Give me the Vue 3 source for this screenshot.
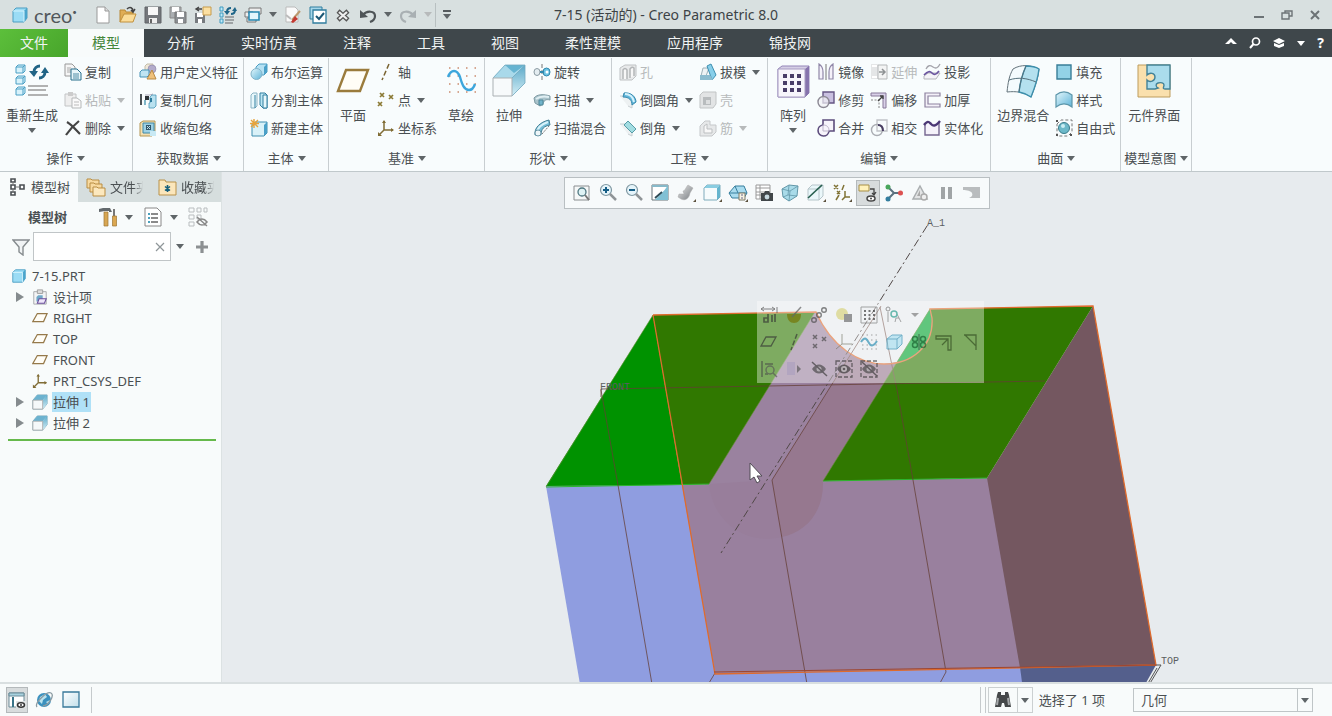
<script setup>
import { ref } from 'vue'

const quick = [
  { icon: 'new', name: '新建' },
  { icon: 'open', name: '打开' },
  { icon: 'save', name: '保存' },
  { icon: 'saveas', name: '保存副本' },
  { icon: 'upload', name: '另存为' },
  { icon: 'regenlist', name: '重新生成' },
  { icon: 'windows', name: '窗口' },
  { caret: true, name: '窗口选项' },
  { icon: 'erase', name: '拭除' },
  { icon: 'check', name: '检查' },
  { icon: 'close', name: '关闭' },
  { icon: 'undo', name: '撤消' },
  { caret: true, name: '撤消列表' },
  { icon: 'redo', name: '重做', disabled: true },
  { caret: true, name: '重做列表', disabled: true }
]

const tabs = ['分析', '实时仿真', '注释', '工具', '视图', '柔性建模', '应用程序', '锦技网']

const groups = [
  {
    title: '操作',
    cols: [
      { big: true, icon: 'regen', label: '重新生成', caret: true },
      { items: [
        { icon: 'copy', label: '复制' },
        { icon: 'paste', label: '粘贴', caret: true, disabled: true },
        { icon: 'delete', label: '删除', caret: true }
      ] }
    ]
  },
  {
    title: '获取数据',
    cols: [
      { items: [
        { icon: 'udf', label: '用户定义特征' },
        { icon: 'copygeom', label: '复制几何' },
        { icon: 'shrink', label: '收缩包络' }
      ] }
    ]
  },
  {
    title: '主体',
    cols: [
      { items: [
        { icon: 'boolean', label: '布尔运算' },
        { icon: 'split', label: '分割主体' },
        { icon: 'newbody', label: '新建主体' }
      ] }
    ]
  },
  {
    title: '基准',
    cols: [
      { big: true, icon: 'plane', label: '平面' },
      { items: [
        { icon: 'axis', label: '轴' },
        { icon: 'point', label: '点', caret: true },
        { icon: 'csys', label: '坐标系' }
      ] },
      { big: true, icon: 'sketch', label: '草绘' }
    ]
  },
  {
    title: '形状',
    cols: [
      { big: true, icon: 'extrude', label: '拉伸' },
      { items: [
        { icon: 'revolve', label: '旋转' },
        { icon: 'sweep', label: '扫描', caret: true },
        { icon: 'blend', label: '扫描混合' }
      ] }
    ]
  },
  {
    title: '工程',
    wide: true,
    cols: [
      { items: [
        { icon: 'hole', label: '孔', disabled: true },
        { icon: 'round', label: '倒圆角', caret: true },
        { icon: 'chamfer', label: '倒角', caret: true }
      ] },
      { items: [
        { icon: 'draft', label: '拔模', caret: true },
        { icon: 'shell', label: '壳', disabled: true },
        { icon: 'rib', label: '筋', caret: true, disabled: true }
      ] }
    ]
  },
  {
    title: '编辑',
    wide: true,
    cols: [
      { big: true, icon: 'pattern', label: '阵列', caret: true },
      { items: [
        { icon: 'mirror', label: '镜像' },
        { icon: 'trim', label: '修剪' },
        { icon: 'merge', label: '合并' }
      ] },
      { items: [
        { icon: 'extend', label: '延伸', disabled: true },
        { icon: 'offset', label: '偏移' },
        { icon: 'intersect', label: '相交' }
      ] },
      { items: [
        { icon: 'project', label: '投影' },
        { icon: 'thicken', label: '加厚' },
        { icon: 'solidify', label: '实体化' }
      ] }
    ]
  },
  {
    title: '曲面',
    cols: [
      { big: true, icon: 'boundary', label: '边界混合' },
      { items: [
        { icon: 'fill', label: '填充' },
        { icon: 'style', label: '样式' },
        { icon: 'freestyle', label: '自由式' }
      ] }
    ]
  },
  {
    title: '模型意图',
    wide: true,
    cols: [{ big: true, icon: 'interface', label: '元件界面' }]
  }
]

const tree = [
  { icon: 'design', label: '设计项', open: true },
  { icon: 'planes', label: 'RIGHT' },
  { icon: 'planes', label: 'TOP' },
  { icon: 'planes', label: 'FRONT' },
  { icon: 'csys', label: 'PRT_CSYS_DEF' },
  { icon: 'extrudes', label: '拉伸 1', open: true, selected: true },
  { icon: 'extrudes', label: '拉伸 2', open: true }
]

const viewTools = [
  ['zfit', '重新调整'], ['zin', '放大'], ['zout', '缩小'], ['repaint', '重画'],
  ['render', '渲染选项'], ['shade', '显示样式'], ['saved', '已保存方向'], ['viewmgr', '视图管理器'],
  ['persp', '透视图'], ['section', '截面'], ['datumdisp', '基准显示'], ['annot', '注释显示'],
  ['spin', '旋转中心'], ['simulate', '仿真'], ['pause', '暂停'], ['resume', '继续']
]

const miniTools = [
  ['dim', 'appearance', 'link', 'body', 'patternm', 'family', 'down'],
  ['planem', 'axism', 'pointm', 'csysm', 'sketchm', 'extrudem', 'flower', 'offsetm', 'draftm'],
  ['query', 'arrowm', 'hide', 'show', 'hideall']
]

const search = ref('')
const filter = ref('几何')
</script>

<template>
  <div class="app">
    <svg class="defs" width="0" height="0" aria-hidden="true">
      <defs>
        <linearGradient id="gb" x1="0" y1="0" x2="1" y2="1"><stop offset="0" stop-color="#e4f7fc" /><stop offset="1" stop-color="#5fb4d8" /></linearGradient>
        <linearGradient id="gw" x1="0" y1="0" x2="1" y2="1"><stop offset="0" stop-color="#ffffff" /><stop offset="1" stop-color="#c3dfea" /></linearGradient>
        <linearGradient id="gg" x1="0" y1="0" x2="1" y2="1"><stop offset="0" stop-color="#e8e8e8" /><stop offset="1" stop-color="#777c80" /></linearGradient>
        <linearGradient id="gv" x1="0" y1="0" x2="0" y2="1"><stop offset="0" stop-color="#5ba9c8" /><stop offset="1" stop-color="#d5eff7" /></linearGradient>
      </defs>
      <symbol id="cube" viewBox="0 0 18 18"><path d="M2 5l3-3h11v10l-3 4H2z" fill="#9bdcf5" stroke="#4b9dc2" /><path d="M13 5l3-3v10l-3 4z" fill="#4aa5cc" /><path d="M2 5h11v11" fill="none" stroke="#d5f4fd" /></symbol>
      <symbol id="new" viewBox="0 0 18 18"><path d="M3 1h8l4 4v12H3z" fill="#fff" stroke="#999" /><path d="M11 1v4h4" fill="#ddd" stroke="#999" /></symbol>
      <symbol id="open" viewBox="0 0 18 18"><path d="M1 16V4h5l1 2h7v3" fill="#e0ad55" stroke="#b98834" /><path d="M1 16l4-8h12l-3 8z" fill="#fbdc98" stroke="#c0903c" /><path d="M8 3c3-3 6-1 6 2m-2-1l2 2 2-3" fill="none" stroke="#444" stroke-width="1.5" /></symbol>
      <symbol id="save" viewBox="0 0 18 18"><path d="M1 1h16v16H1z" fill="#74777b" stroke="#606468" /><path d="M4 1h10v8H4z" fill="#f7f7f7" /><path d="M5 12h8v5H5z" fill="#eee" /><path d="M6 13h2v4H6z" fill="#666" /></symbol>
      <symbol id="saveas" viewBox="0 0 18 18"><path d="M1 1h11v11H1z" fill="#aaaeb1" stroke="#888" /><path d="M3 1h7v5H3z" fill="#fff" /><path d="M6 6h11v11H6z" fill="#8b8f93" stroke="#777" /><path d="M8 6h7v5H8zM9 13h5v4H9z" fill="#fff" /></symbol>
      <symbol id="upload" viewBox="0 0 18 18"><path d="M1 7h10v10H1z" fill="#777b7f" /><path d="M3 7h6v4H3zM4 13h4v4H4z" fill="#fff" /><path d="M9 1h8v8H9z" fill="#fbe0a2" stroke="#c69b4c" /><path d="M8 3H3m2-2L2 3l3 2" stroke="#444" fill="none" stroke-width="1.4" /></symbol>
      <symbol id="regenlist" viewBox="0 0 18 18"><path d="M1 1h3v4H1zM1 7h3v4H1zM1 13h3v4H1z" fill="#bfe9f7" stroke="#3e9bc1" /><path d="M6 11h9M6 14h9M6 17h8" stroke="#8a8e91" stroke-width="1.300" /><path d="M8 6c0-3 2-4 4-4M16 4c0 3-2 4-4 4" fill="none" stroke="#1f6689" stroke-width="2" /><path d="M5 5h6L8 9zM13 5h5l-2-4z" fill="#1f6689" /></symbol>
      <symbol id="windows" viewBox="0 0 18 18"><path d="M5 2h12v6H5zM1 6v5h8V6zM3 12v4h9v-4z" fill="#eee" stroke="#777" /><path d="M5 6h10v8H5z" fill="#e4f6fc" stroke="#2586b0" stroke-width="1.5" /></symbol>
      <symbol id="erase" viewBox="0 0 18 18"><path d="M2 1h9l3 3v12H2z" fill="#fafafa" stroke="#bbb" /><path d="M8 14l8-9" stroke="#bb9a6e" stroke-width="2" /><path d="M7 16l4-6 3 3-5 4z" fill="#c33a32" /><path d="M2 9l5 4" stroke="#bbb" stroke-width="2" /></symbol>
      <symbol id="check" viewBox="0 0 18 18"><path d="M1 1h12v12H1z" fill="#a7d7ea" stroke="#307e9f" /><path d="M4 4h13v13H4z" fill="#fff" stroke="#307e9f" stroke-width="1.3" /><path d="M7 10l3 3 5-6" fill="none" stroke="#1c5775" stroke-width="2" /></symbol>
      <symbol id="close" viewBox="0 0 18 18"><path d="M4 5l10 9M14 5L4 14" stroke="#555" stroke-width="4.500" /><path d="M5 6l8 7M13 6l-8 7" stroke="#eee" stroke-width="2.300" /></symbol>
      <symbol id="undo" viewBox="0 0 18 18"><path d="M4 9c4-5 12-4 12 1 0 3-2 5-5 6" fill="none" stroke="#4f5558" stroke-width="2.200" /><path d="M1 4v8l8-1z" fill="#4f5558" /></symbol>
      <symbol id="redo" viewBox="0 0 18 18"><path d="M14 9C10 4 2 5 2 10c0 3 2 5 5 6" fill="none" stroke="#a9b0b3" stroke-width="2.200" /><path d="M17 4v8l-8-1z" fill="#a9b0b3" /></symbol>

      <symbol id="regen" viewBox="0 0 34 34"><g fill="#d8f2fb" stroke="#4b9fc4"><path d="M1 3l2-2h7v6l-2 2H1zM1 14l2-2h7v6l-2 2H1zM1 25l2-2h7v6l-2 2H1z" /><path d="M1 3h7v6M8 3l2-2M1 14h7v6M8 14l2-2M1 25h7v6M8 25l2-2" fill="none" /></g><path d="M13 22h20M13 26h18M13 31h20" stroke="#999" stroke-width="1.600" /><path d="M19 8c0-4 3-6 6-6M30 8c0 4-3 6-6 6" fill="none" stroke="#216486" stroke-width="3" /><path d="M14 7h9l-4 6zM26 9h8l-4-6z" fill="#216486" /></symbol>
      <symbol id="copy" viewBox="0 0 18 18"><path d="M1 1h7l3 3v9H1z" fill="#f5f5f5" stroke="#999" /><path d="M3 5h4M3 7h4M3 9h4" stroke="#aaa" /><path d="M7 6h6l4 4v7H7z" fill="#e8f5f9" stroke="#276e8c" /><path d="M9 11h6M9 13h6M9 15h6" stroke="#4e8ca5" /></symbol>
      <symbol id="paste" viewBox="0 0 18 18"><path d="M1 3h11v12H1z" fill="#eee" stroke="#c2c4c5" /><path d="M4 1h5v4H4z" fill="#ccc" /><path d="M8 7h5l4 3v7H8z" fill="#fafafa" stroke="#b5b8b9" /><path d="M10 11h5M10 14h5" stroke="#bbb" /></symbol>
      <symbol id="delete" viewBox="0 0 18 18"><path d="M3 3c5 3 8 7 13 12M15 2C10 6 6 10 2 16" fill="none" stroke="#444" stroke-width="2.2" /></symbol>
      <symbol id="udf" viewBox="0 0 18 18"><path d="M6 3l2-2h6v6l-2 2H6z" fill="#eee7d8" stroke="#c4bda9" /><circle cx="13" cy="6" r="4" fill="#b3accb" stroke="#8983a5" stroke-width=".6" /><path d="M1 9l2-2h7v5l-2 2H1z" fill="#bfe4f3" stroke="#4793b7" /><path d="M13 7l4 9H8z" fill="#efc17b" stroke="#b88843" /></symbol>
      <symbol id="copygeom" viewBox="0 0 18 18"><path d="M2 3v11" stroke="#4c5357" stroke-width="2" /><path d="M6 4h5l3-1" stroke="#aab" fill="none" /><path d="M6 5h4v4H6z" fill="#2e3438" /><path d="M6 9v5" stroke="#7fb6c9" stroke-width="2" /><path d="M11 6l2-2h4v11l-2 2h-5v-5h1z" fill="#b8e1ef" stroke="#4595b6" stroke-width=".8" /><path d="M12 7v4" stroke="#2d7b9c" stroke-width="2" /></symbol>
      <symbol id="shrink" viewBox="0 0 18 18"><path d="M1 4l3-2h12v12l-3 3H1z" fill="#f3dfb1" stroke="#b49652" /><path d="M4 4h11v10H4z" fill="#9ed1e4" stroke="#3f88a8" /><path d="M7 6h5v5H7z" fill="#34566a" /><path d="M8 7l3 3m0-3l-3 3" stroke="#bde3f0" /><path d="M11 12h6v5h-6z" fill="#c8e9f4" /></symbol>
      <symbol id="boolean" viewBox="0 0 18 18"><path d="M6 4l3-3h8v8l-3 3H6z" fill="#b5e1f3" stroke="#4b9dc2" /><path d="M14 4l3-3v8l-3 3z" fill="#4aa0c8" /><circle cx="6.500" cy="11" r="5.500" fill="url(#gb)" stroke="#84b4c9" /></symbol>
      <symbol id="split" viewBox="0 0 18 18"><path d="M1 4l2-2h4v13l-2 2H1z" fill="#e7f7fb" stroke="#8bb3c4" /><path d="M5 4v13M10 2h5l2 2v13h-4l-3-3z" fill="#bce6f4" stroke="#317e9f" /><path d="M13 4h4v13h-4z" fill="#e7f7fb" stroke="#317e9f" /></symbol>
      <symbol id="newbody" viewBox="0 0 18 18"><path d="M2 5l3-2h12v11l-3 3H2z" fill="#d9f1f8" stroke="#3f8eb0" /><path d="M14 6l3-3v11l-3 3z" fill="#4aa0c8" /><path d="M4 0v9M0 4.500h9M1 1l7 7M8 1L1 8" stroke="#e6a33c" stroke-width="1.4" /></symbol>
      <symbol id="plane" viewBox="0 0 34 34"><path d="M10 6h22l-8 21H2z" fill="#fffdf6" stroke="#9a7b3c" stroke-width="2.400" /></symbol>
      <symbol id="planes" viewBox="0 0 18 18"><path d="M6 4h11l-4 9H1z" fill="#fffdf6" stroke="#95794a" stroke-width="1.400" /></symbol>
      <symbol id="axis" viewBox="0 0 18 18"><path d="M12 1l-7 16" stroke="#7a6432" stroke-width="1.5" stroke-dasharray="5 2.500" /></symbol>
      <symbol id="point" viewBox="0 0 18 18"><path d="M3 2l4 4M7 2L3 6M12 4l4 4M16 4l-4 4M1 11l4 4M5 11l-4 4" stroke="#8b7a35" stroke-width="1.700" /></symbol>
      <symbol id="csys" viewBox="0 0 18 18"><path d="M7 2v9h9M7 11l-5 5" fill="none" stroke="#806c35" stroke-width="1.500" /><path d="M5 4l2-3 2 3zM14 9l3 2-3 2zM1 13v4h4z" fill="#806c35" /></symbol>
      <symbol id="sketch" viewBox="0 0 34 34"><path d="M5 4h28M5 12h28M5 20h28M5 28h28" stroke="#c98a6d" stroke-width="1.500" stroke-dasharray="1.500 7" /><path d="M4 13c3-8 9-8 12 0 2 7 4 13 9 13 3 0 5-3 6-6" fill="none" stroke="#3da6dc" stroke-width="2.400" /></symbol>
      <symbol id="extrude" viewBox="0 0 34 34"><path d="M1 14L13 1h20v18L20 32H1z" fill="#9bcfe5" /><path d="M13 1h20L20 14H1z" fill="#a9d9ea" /><path d="M13 1h20L22 9z" fill="#66b4d1" /><path d="M20 14L33 1v18L20 32z" fill="url(#gv)" /><path d="M1 14L13 1h20v18L20 32M20 14L33 1" fill="none" stroke="#74aabf" stroke-width=".8" /><path d="M1 14h19v18H1z" fill="#f7fafb" stroke="#aab0b3" /></symbol>
      <symbol id="extrudes" viewBox="0 0 18 18"><path d="M1 7l5-6h11v10l-5 6H1z" fill="#b7dfee" stroke="#81aebf" /><path d="M6 1h11l-5 6H1z" fill="#6cb2cf" /><path d="M12 7l5-6v10l-5 6z" fill="url(#gv)" /><path d="M1 7h11v10H1z" fill="#f5f8f9" stroke="#aaa" /></symbol>
      <symbol id="revolve" viewBox="0 0 18 18"><path d="M9 1v16" stroke="#777" stroke-dasharray="4 2" /><ellipse cx="4" cy="9" rx="3" ry="3.500" fill="#e4edf1" stroke="#8a9aa2" /><ellipse cx="13.500" cy="9" rx="3.500" ry="4" fill="#6ec3e3" stroke="#3188ad" /><circle cx="14" cy="9" r="1.500" fill="#fff" /><path d="M7 9h4" stroke="#3188ad" stroke-width="2" /></symbol>
      <symbol id="sweep" viewBox="0 0 18 18"><path d="M1 7c3-4 10-4 16-2v4c-4-1-6 0-7 4l-3 2-5-3z" fill="#a9c3cb" stroke="#7f9aa3" /><path d="M3 8c4-3 8-3 13-2" stroke="#e0eff3" fill="none" stroke-width="2" /><path d="M6 9h4v5H6z" fill="#71b3ca" stroke="#4f8799" /></symbol>
      <symbol id="blend" viewBox="0 0 18 18"><path d="M2 16C1 9 7 3 16 1l1 5c-6 1-9 4-9 10z" fill="#74bdd7" stroke="#447f94" /><path d="M4 14C4 9 9 5 15 3" stroke="#d7f2fa" stroke-width="2" fill="none" /><circle cx="5" cy="14" r="3" fill="#eef6f9" stroke="#6c98a8" /><path d="M9 15l7-8" stroke="#777" stroke-dasharray="2 1" /></symbol>
      <symbol id="hole" viewBox="0 0 18 18"><path d="M1 5l5-3h11v11l-4 4H1z" fill="#e8eaeb" stroke="#bfc2c4" /><path d="M4 16V7q2-3 4 0v9M11 15V6q2-3 4-1v8" fill="#f7f7f7" stroke="#b3b6b8" stroke-width="1.500" /></symbol>
      <symbol id="round" viewBox="0 0 18 18"><path d="M1 5h7l5 4v8l-4-2" fill="#edf1f2" stroke="#c9d0d3" /><path d="M5 2c7-1 12 4 12 9l-4 3c0-5-3-8-9-8z" fill="#61b6da" stroke="#388aad" /><path d="M6 3c5 0 8 3 9 8" stroke="#d4f2fc" stroke-width="2" fill="none" /></symbol>
      <symbol id="chamfer" viewBox="0 0 18 18"><path d="M1 5h6l6 7v5l-4-2" fill="#edf1f2" stroke="#c9d0d3" /><path d="M9 2l8 8-4 4-8-8z" fill="#a2dde2" stroke="#579ca7" /></symbol>
      <symbol id="draft" viewBox="0 0 18 18"><path d="M4 5h6l-3 8H2z" fill="#eef3f5" stroke="#9eb1b8" /><path d="M8 3l4-2 5 11-4 5z" fill="#88cfea" stroke="#3e90b1" /><path d="M1 12h10l3 5H1z" fill="#8cbccf" /></symbol>
      <symbol id="shell" viewBox="0 0 18 18"><path d="M1 4l3-3h13v12l-3 4H1z" fill="#e2e4e5" stroke="#c1c4c5" /><path d="M4 6h8v8H4z" fill="#b8bcbe" /><path d="M7 9h4v4H7z" fill="#dcdedf" /></symbol>
      <symbol id="rib" viewBox="0 0 18 18"><path d="M1 7l5-5h5v4h6v7l-4 4H1z" fill="#e6e8e9" stroke="#c5c8ca" /><path d="M5 7l3-2v5h5v4H5z" fill="#f8f8f8" stroke="#bcbfc1" /></symbol>
      <symbol id="pattern" viewBox="0 0 34 34"><path d="M2 5l4-3h27v27l-4 4H2z" fill="#d5cee5" stroke="#9485b8" /><path d="M29 5l4-3v27l-4 4z" fill="#8673ad" /><path d="M2 5h27v28H2z" fill="#f7f5fb" stroke="#a79cc2" /><g fill="#493d68"><path d="M7 10h4v4H7zM14 10h4v4h-4zM21 10h4v4h-4zM7 17h4v4H7zM14 17h4v4h-4zM21 17h4v4h-4zM7 24h4v4H7zM14 24h4v4h-4zM21 24h4v4h-4z" /></g></symbol>
      <symbol id="mirror" viewBox="0 0 18 18"><path d="M9 1v16" stroke="#777" /><path d="M2 1c3 2 4 4 4 8v7H2zM16 1c-3 2-4 4-4 8v7h4z" fill="#f5f2fa" stroke="#9087a8" stroke-width="1.200" /></symbol>
      <symbol id="trim" viewBox="0 0 18 18"><path d="M6 1h11v11H6z" fill="#c9c0e0" stroke="#655684" stroke-width="1.400" /><circle cx="6.500" cy="11" r="5.500" fill="#f2f2f5" fill-opacity=".7" stroke="#8d8a95" stroke-width="1.400" /></symbol>
      <symbol id="merge" viewBox="0 0 18 18"><path d="M6 6V1h11v11h-5a5.500 5.500 0 1 1-6-6z" fill="#f7f4fb" stroke="#5c4c7c" stroke-width="1.600" /><path d="M6 6c4 0 6 2 6 6H6z" fill="none" stroke="#bbb3c8" /></symbol>
      <symbol id="extend" viewBox="0 0 18 18"><path d="M1 1h7v15H1z" fill="#e4e6e7" /><path d="M8 2h9v14H8z" fill="#f3f4f4" stroke="#b4b7b8" /><path d="M2 3h5M2 14h5" stroke="#fff" stroke-width="2" /><path d="M9 9h6m-3-3l3 3-3 3" stroke="#8e9294" fill="none" stroke-width="1.500" /></symbol>
      <symbol id="offset" viewBox="0 0 18 18"><path d="M1 2h15v15h-3V5H1z" fill="#d9d1e9" stroke="#877899" /><path d="M1 9h8v8" stroke="#888" stroke-dasharray="2 1.500" fill="none" /><path d="M8 10l5-5m-3 0h3v3" stroke="#444" fill="none" stroke-width="1.400" /></symbol>
      <symbol id="intersect" viewBox="0 0 18 18"><path d="M7 1h10v11H7z" fill="none" stroke="#c0c2c7" stroke-width="1.300" /><circle cx="7" cy="11" r="5.500" fill="none" stroke="#aaadb3" stroke-width="1.400" /><path d="M8 6c3 0 5 2 5 6" stroke="#493e62" stroke-width="2" fill="none" /></symbol>
      <symbol id="project" viewBox="0 0 18 18"><path d="M3 6c2-4 4-4 7-2s5 1 7-3" stroke="#a3a3aa" fill="none" stroke-width="1.300" /><path d="M1 13l4-3h12l-4 6H1z" fill="#f4f3f7" stroke="#b5b5bb" /><path d="M1 12c4-4 6-4 8-2s4 2 7-2" stroke="#6b55a0" fill="none" stroke-width="1.700" /></symbol>
      <symbol id="thicken" viewBox="0 0 18 18"><path d="M17 2H2v14h15v-3H5V5h12z" fill="#f3f0f8" stroke="#8d829f" stroke-width="1.200" /></symbol>
      <symbol id="solidify" viewBox="0 0 18 18"><path d="M2 6v10h14V3" fill="#f5f2fa" stroke="#756790" stroke-width="1.400" /><path d="M1 6c4-5 5-3 7-1s4 3 9-3" fill="none" stroke="#4b3775" stroke-width="2.400" /></symbol>
      <symbol id="boundary" viewBox="0 0 34 34"><path d="M7 5c8-5 18-4 26 0-1 10-4 18-8 28-7-5-15-6-24-5 1-9 2-16 6-23z" fill="#f4fbfd" stroke="#64737b" /><path d="M20 2c6 0 10 1 13 3-1 10-4 18-8 28-4-3-7-4-12-5 1-9 3-17 7-26z" fill="#b4e1ef" stroke="#3c8fac" stroke-width="1.400" /><path d="M3 16c9-3 18-2 27 2M20 2c-4 9-6 17-7 26" stroke="#55717c" fill="none" /></symbol>
      <symbol id="fill" viewBox="0 0 18 18"><path d="M2 2h14v14H2z" fill="#93d2e7" stroke="#397e98" stroke-width="1.400" /></symbol>
      <symbol id="style" viewBox="0 0 18 18"><path d="M1 4c5-4 11-4 16 0v12c-5-4-11-4-16 0z" fill="url(#gb)" stroke="#5d96aa" stroke-width="1.200" /></symbol>
      <symbol id="freestyle" viewBox="0 0 18 18"><path d="M2 5l4-4h11v12l-4 4H2z" fill="none" stroke="#777" stroke-dasharray="3 2" /><circle cx="9" cy="9" r="5.500" fill="#6db9c9" stroke="#397b8a" /><circle cx="8" cy="7" r="2" fill="#cbeef2" /><path d="M1 1h2v2H1zM15 15h2v2h-2zM1 15h2v2H1z" fill="#555" /></symbol>
      <symbol id="interface" viewBox="0 0 34 34"><path d="M1 1h32v32H1z" fill="#fae0ad" stroke="#bd9c5c" /><path d="M10 1h23v24h-5c-3 0-1-2-1-4s-3-3-6-2-2 4 0 5l-3 1h-8v-9c3 3 8 1 8-3s-5-5-8-2z" fill="#aadcec" stroke="#438297" stroke-width="1.400" /></symbol>

      <symbol id="tree" viewBox="0 0 18 18"><g fill="#fff" stroke="#4a4f53" stroke-width="1.600"><path d="M3 1h4v3H3zM3 7h4v4H3zM3 14h4v3H3zM12 7h4v4h-4z" /></g><path d="M5 4v3M5 11v3M8 9h3" stroke="#777" /></symbol>
      <symbol id="folders" viewBox="0 0 20 20"><g fill="#f8daa0" stroke="#b98d43"><path d="M1 2h4l1 1h7v8H1z" /><path d="M4 6h4l1 1h7v8H4z" /><path d="M7 10h4l1 1h7v8H7z" fill="#fce8be" /></g></symbol>
      <symbol id="favor" viewBox="0 0 20 20"><path d="M2 3h6l1 2h10v13H2z" fill="#fbe6bb" stroke="#b9924b" /><path d="M10.500 8v7M8 9.500l5 4M13 9.500l-5 4" stroke="#17607c" stroke-width="1.600" /></symbol>
      <symbol id="tools" viewBox="0 0 20 20"><path d="M1 2l4-1h7l2 4h-3V4H7L1 5z" fill="#63696d" /><path d="M6 5h4v14H6z" fill="#d7a653" stroke="#9e7734" stroke-width=".7" /><path d="M16 2v7" stroke="#777" stroke-width="2" /><path d="M14.500 9h4v10h-4z" fill="#dba751" stroke="#9e7734" stroke-width=".7" /></symbol>
      <symbol id="sheet" viewBox="0 0 20 20"><path d="M2 1h12l4 4v14H2z" fill="#fff" stroke="#888" /><path d="M5 7h2M5 11h2M5 15h2" stroke="#4ba1bd" stroke-width="2" /><path d="M8 7h7M8 11h7M8 15h7" stroke="#666" stroke-width="1.300" /></symbol>
      <symbol id="treehide" viewBox="0 0 20 20"><g fill="none" stroke="#b9bdbf"><path d="M1 1h5v4H1zM1 8h5v4H1zM1 15h5v4H1zM9 1h4v4H9zM9 8h4v4H9zM16 1h3v4h-3z" /></g><path d="M9 15c3-4 7-4 10 0-3 4-7 4-10 0zM9 10l10 9" fill="none" stroke="#888" stroke-width="1.500" /></symbol>
      <symbol id="funnel" viewBox="0 0 18 18"><path d="M1 2h16l-6 7v8l-4-3V9z" fill="#f0f3f4" stroke="#858b8e" stroke-width="1.400" /></symbol>
      <symbol id="plus" viewBox="0 0 14 14"><path d="M7 1v12M1 7h12" stroke="#8c9092" stroke-width="3.200" /></symbol>
      <symbol id="design" viewBox="0 0 18 18"><path d="M2 3h14v14H2z" fill="#f3f4f5" stroke="#a2a5a8" /><path d="M6 1h6v4H6z" fill="#ddd" stroke="#999" /><path d="M5 9l2-2h5v5l-2 2H5z" fill="#6fa8c8" /><path d="M8 11h8l-2 5H6z" fill="#eee6fa" stroke="#6a4e9b" stroke-width="1.200" /></symbol>

      <symbol id="zfit" viewBox="0 0 20 20"><path d="M2 3h15v14H2z" fill="#f6f8f8" stroke="#8a8e90" /><circle cx="10" cy="9" r="4" fill="#dff3f5" stroke="#4f7780" stroke-width="1.300" /><path d="M13 12l4 5" stroke="#777" stroke-width="2" /></symbol>
      <symbol id="zin" viewBox="0 0 20 20"><circle cx="8" cy="7" r="5.500" fill="#e5f4fa" stroke="#7f97a1" stroke-width="1.200" /><path d="M12 11l6 6" stroke="#909598" stroke-width="2.500" /><path d="M8 4v6M5 7h6" stroke="#165e86" stroke-width="2" /></symbol>
      <symbol id="zout" viewBox="0 0 20 20"><circle cx="8" cy="7" r="5.500" fill="#e5f4fa" stroke="#7f97a1" stroke-width="1.200" /><path d="M12 11l6 6" stroke="#909598" stroke-width="2.500" /><path d="M5 7h6" stroke="#165e86" stroke-width="2" /></symbol>
      <symbol id="repaint" viewBox="0 0 20 20"><path d="M2 2h16v15H2z" fill="#fff" stroke="#69757b" /><path d="M18 2v15H5c2-3 9-8 13-15z" fill="#80c0d4" /><path d="M5 15l7-6" stroke="#2f4b57" stroke-width="1.800" /><path d="M2 2h16v2H2z" fill="#87b9c9" /></symbol>
      <symbol id="render" viewBox="0 0 20 20"><path d="M12 2l5 3-3 5c-1 6-5 8-9 6l-3-2 1-3h5l-1-3c2 0 3-4 5-6z" fill="url(#gg)" stroke="#aaa" stroke-width=".5" /><path d="M20 16v3h-3z" fill="#5c513d" /></symbol>
      <symbol id="shade" viewBox="0 0 20 20"><path d="M2 5l3-3h13v12l-3 3H2z" fill="#f6fbfc" stroke="#7fabbb" /><path d="M5 2h13l-3 3H2z" fill="#8acde1" /><path d="M15 5l3-3v12l-3 3z" fill="#66b5ce" /><path d="M20 16v3h-3z" fill="#5c513d" /></symbol>
      <symbol id="saved" viewBox="0 0 20 20"><path d="M1 10l6-7h9l3 7-3 5H4z" fill="#a9dcef" stroke="#377e9d" /><path d="M7 3l3 7h9M1 10h9" fill="none" stroke="#377e9d" /><path d="M11 10h6v7h-6z" fill="#f6f2e2" stroke="#7f7a68" /><path d="M13 12h2M13 15h2" stroke="#668" /><path d="M20 16v3h-3z" fill="#5c513d" /></symbol>
      <symbol id="viewmgr" viewBox="0 0 20 20"><path d="M2 2h14v14H2z" fill="#fff" stroke="#999" /><path d="M2 5h14M2 9h14M2 12h14M6 2v14" stroke="#999" /><path d="M7 10h3l1-2h4l1 2h3v8H7z" fill="#414649" /><circle cx="13" cy="14" r="2.400" fill="#c6d8df" /></symbol>
      <symbol id="persp" viewBox="0 0 20 20"><path d="M2 6l7-4 9 1-1 10-8 5-6-4z" fill="#a9dbe9" stroke="#6297a8" /><path d="M2 6l8 2 8-5M10 8l-1 10M9 2l-1 10-5 2M8 12l9 1" stroke="#6297a8" fill="none" stroke-width=".8" /></symbol>
      <symbol id="section" viewBox="0 0 20 20"><path d="M2 6l4-4h11v11l-4 4H2z" fill="#eaf7fa" stroke="#b6c5ca" /><path d="M2 6h11v11M13 6l4-4" fill="none" stroke="#b6c5ca" /><path d="M2 15L16 2" stroke="#286050" stroke-width="1.700" /><path d="M20 16v3h-3z" fill="#5c513d" /></symbol>
      <symbol id="datumdisp" viewBox="0 0 20 20"><path d="M2 2l4 4M6 2L2 6M12 2l-2 5M5 8l3 3M8 8l-3 3M4 17l3-5M13 8v6h5M13 14l-3 3" stroke="#807336" stroke-width="1.500" fill="none" /><path d="M20 16v3h-3z" fill="#5c513d" /></symbol>
      <symbol id="annot" viewBox="0 0 20 20"><path d="M1 2h10v6H1z" fill="#fff1ba" stroke="#a78f46" /><path d="M12 6h4v6m-2-2l2 2 2-3" stroke="#444" fill="none" stroke-width="1.300" /><ellipse cx="13" cy="15.500" rx="4" ry="2.500" fill="#fff" stroke="#444" stroke-width="1.500" /><circle cx="13" cy="15.500" r="1" fill="#444" /></symbol>
      <symbol id="spin" viewBox="0 0 20 20"><path d="M4 4l6 6h6M10 10l-6 6" stroke="#5c7280" stroke-width="2" fill="none" /><circle cx="4" cy="4" r="2.500" fill="#49a65c" /><circle cx="16.500" cy="10" r="2.500" fill="#dc5151" /><circle cx="4" cy="16" r="2.500" fill="#347e9f" /></symbol>
      <symbol id="simulate" viewBox="0 0 20 20"><path d="M10 3l7 13H3z" fill="#e3e4e5" stroke="#aaaeb0" stroke-width="1.500" /><path d="M10 7v6H7z" fill="#aaa" /><circle cx="14" cy="14" r="3" fill="#eee" stroke="#aaa" stroke-width="1.500" /></symbol>
      <symbol id="pause" viewBox="0 0 20 20"><path d="M5 4h4v12H5zM12 4h4v12h-4z" fill="#a0a4a6" /></symbol>
      <symbol id="resume" viewBox="0 0 20 20"><path d="M1 4h17v11H7c3-1 4-3 3-5S5 7 1 7z" fill="#b9bcbe" /></symbol>

      <symbol id="dim" viewBox="0 0 18 18"><path d="M1 3h14M4 1L1 3l3 2M12 1l3 2-3 2M17 1v6" fill="none" stroke="#444" /><path d="M8 8v8H4v-4h4M12 9v7M15 8v8" fill="none" stroke="#333" stroke-width="1.700" /></symbol>
      <symbol id="appearance" viewBox="0 0 18 18"><path d="M2 8h14c0 6-3 9-7 9s-7-3-7-9z" fill="#747300" /><path d="M7 11l9-10" stroke="#555" stroke-width="1.500" /></symbol>
      <symbol id="link" viewBox="0 0 18 18"><g fill="none" stroke="#444" stroke-width="1.400"><circle cx="4" cy="14" r="2.300" /><circle cx="9" cy="9" r="2.300" /><circle cx="14" cy="4" r="2.300" /></g></symbol>
      <symbol id="body" viewBox="0 0 18 18"><circle cx="7" cy="8" r="6" fill="#d6d177" /><path d="M9 8h8v8H9z" fill="#666" /></symbol>
      <symbol id="patternm" viewBox="0 0 18 18"><path d="M1 1h16v16H1z" fill="none" stroke="#777" /><path d="M4 5h11M4 9h11M4 13h11" stroke="#333" stroke-width="2" stroke-dasharray="2 2.500" /></symbol>
      <symbol id="family" viewBox="0 0 18 18"><path d="M3 6v10M12 8l4 8M14 12h-3l-1 4" stroke="#777" fill="none" /><circle cx="3" cy="3" r="2" fill="none" stroke="#666" /><circle cx="9" cy="8" r="3" fill="none" stroke="#219a89" stroke-width="1.500" /></symbol>
      <symbol id="down" viewBox="0 0 18 18"><path d="M1 7h8L5 11z" fill="#777" /></symbol>
      <symbol id="planem" viewBox="0 0 18 18"><path d="M6 4h10l-5 9H1z" fill="none" stroke="#333" stroke-width="1.300" /></symbol>
      <symbol id="axism" viewBox="0 0 18 18"><path d="M12 1L6 17" stroke="#333" stroke-width="1.500" stroke-dasharray="5 2" /></symbol>
      <symbol id="pointm" viewBox="0 0 18 18"><path d="M3 2l4 4M7 2L3 6M12 4l4 4M16 4l-4 4M3 11l4 4M7 11l-4 4" stroke="#444" stroke-width="1.500" /></symbol>
      <symbol id="csysm" viewBox="0 0 18 18"><path d="M7 1v10h10M7 11l-6 5" stroke="#776" fill="none" /></symbol>
      <symbol id="sketchm" viewBox="0 0 18 18"><path d="M2 2h15M2 7h15M2 12h15M2 16h15" stroke="#777" stroke-dasharray="1.500 3" /><path d="M1 9c4-6 6-3 8 1s5 3 8-2" stroke="#238bb0" fill="none" stroke-width="2" /></symbol>
      <symbol id="extrudem" viewBox="0 0 18 18"><path d="M2 6l5-4h10v9l-5 5H2zM2 6h10v10M12 6l5-4" fill="#a7dff0" stroke="#318eb2" /></symbol>
      <symbol id="flower" viewBox="0 0 18 18"><g fill="none" stroke="#155c2b" stroke-width="1.500"><circle cx="5" cy="6" r="2.500" /><circle cx="13" cy="6" r="2.500" /><circle cx="5" cy="12" r="2.500" /><circle cx="13" cy="12" r="2.500" /></g><path d="M9 1v16" stroke="#333" /></symbol>
      <symbol id="offsetm" viewBox="0 0 18 18"><path d="M1 3h15v14h-3V6H1zM7 12l6-6" fill="none" stroke="#30491f" stroke-width="1.300" /></symbol>
      <symbol id="draftm" viewBox="0 0 18 18"><path d="M4 2h12v15M5 2l11 11" fill="none" stroke="#30491f" stroke-width="1.300" /></symbol>
      <symbol id="query" viewBox="0 0 18 18"><path d="M2 1v16M5 4h8M5 14h3" stroke="#454545" stroke-width="1.500" /><circle cx="10" cy="10" r="4" fill="none" stroke="#555" stroke-width="1.500" /><path d="M13 13l4 4" stroke="#555" stroke-width="1.500" /></symbol>
      <symbol id="arrowm" viewBox="0 0 18 18"><path d="M2 2h8v13H2z" fill="#7c76b2" opacity=".3" /><path d="M12 5v8l4-4z" fill="#555" /></symbol>
      <symbol id="show" viewBox="0 0 18 18"><path d="M1 1h16v16H1z" fill="none" stroke="#333" stroke-width="1.300" stroke-dasharray="4 2" /><path d="M2 9c4-6 10-6 14 0-4 6-10 6-14 0z" fill="#333" /><circle cx="9" cy="9" r="3" fill="#bbb" /><circle cx="9" cy="9" r="1.300" fill="#333" /></symbol>
      <symbol id="hide" viewBox="0 0 18 18"><path d="M2 9c4-6 10-6 14 0-4 6-10 6-14 0z" fill="#444" /><circle cx="9" cy="9" r="2.500" fill="#aaa" /><path d="M2 2l15 14" stroke="#333" stroke-width="1.500" /></symbol>
      <symbol id="hideall" viewBox="0 0 18 18"><path d="M1 1h16v16H1z" fill="none" stroke="#333" stroke-width="1.300" stroke-dasharray="4 2" /><path d="M2 9c4-6 10-6 14 0-4 6-10 6-14 0z" fill="#444" /><circle cx="9" cy="9" r="2.500" fill="#aaa" /><path d="M2 2l15 14" stroke="#333" stroke-width="1.500" /></symbol>

      <symbol id="panel" viewBox="0 0 18 18"><path d="M1 2h15v14H1z" fill="#fff" stroke="#6d8c98" /><path d="M1 2h15v3H1z" fill="#a8d2df" stroke="#6d8c98" /><path d="M5 6v10" stroke="#397488" stroke-width="2" /><path d="M8 10h10v7H8z" fill="#e1e5e6" /><ellipse cx="13" cy="14" rx="3.500" ry="2.200" fill="#fff" stroke="#333" stroke-width="1.500" /><circle cx="13" cy="14" r="1" fill="#333" /></symbol>
      <symbol id="globe" viewBox="0 0 18 18"><circle cx="9" cy="9" r="7" fill="#3b91be" /><path d="M5 6l5-3 2 3-4 3-1 4-3-3zM11 11l4-2-2 4z" fill="#b9e2ee" /><path d="M2 16C-1 12 12 0 16 2s-2 12-8 13" fill="none" stroke="#8a9aa1" stroke-width="1.300" /></symbol>
      <symbol id="pane" viewBox="0 0 18 18"><path d="M1 1h16v15H1z" fill="url(#gw)" stroke="#39799a" stroke-width="1.300" /></symbol>
      <symbol id="binocular" viewBox="0 0 18 18"><path d="M4 1h3v3h4V1h3l1 3 2 12h-6l-1-4H8l-1 4H1L3 4z" fill="#45484a" /><path d="M4 7L3 14M14 7l1 7" stroke="#a5a8aa" stroke-width="2" /></symbol>
    </svg>

    <header class="titlebar">
      <div class="left">
        <div class="logo"><svg class="ic"><use href="#cube" /></svg><span>creo<sup>•</sup></span></div>
        <button v-for="q in quick" :key="q.name" :class="{ disabled: q.disabled }" :aria-label="q.name">
          <i v-if="q.caret" class="caret"></i>
          <svg v-else class="ic"><use :href="'#' + q.icon" /></svg>
        </button>
        <button class="customize" aria-label="自定义快速访问工具栏"><b></b><i class="caret"></i></button>
      </div>
      <h1>7-15 (活动的) - Creo Parametric 8.0</h1>
      <div class="window">
        <button aria-label="最小化"><svg viewBox="0 0 12 12"><path d="M1 8h10" stroke="#6c7376" stroke-width="2" /></svg></button>
        <button aria-label="还原"><svg viewBox="0 0 12 12"><path d="M4 4V2h7v5H8M1 4h7v6H1z" fill="none" stroke="#6c7376" stroke-width="1.400" /></svg></button>
        <button aria-label="关闭窗口"><svg viewBox="0 0 12 12"><path d="M2 2l8 8M10 2l-8 8" stroke="#6c7376" stroke-width="2" /></svg></button>
      </div>
    </header>

    <nav class="tabs">
      <button class="file">文件</button>
      <button class="active">模型</button>
      <button v-for="t in tabs" :key="t">{{ t }}</button>
      <div class="help">
        <button aria-label="折叠功能区"><svg viewBox="0 0 12 12"><path d="M0 7l6-6 6 6H8L6 5 4 7z" fill="#fff" /></svg></button>
        <button aria-label="搜索"><svg viewBox="0 0 12 12"><circle cx="7" cy="4.500" r="3.500" fill="none" stroke="#fff" stroke-width="1.700" /><path d="M4.500 7L1 11" stroke="#fff" stroke-width="2" /></svg></button>
        <button aria-label="学习"><svg viewBox="0 0 12 12"><path d="M0 4l6-3 6 3-6 3zM1 6l5 2 5-2v3l-5 2-5-2z" fill="#fff" /></svg></button>
        <button aria-label="学习选项"><i class="caret"></i></button>
        <button class="question">?</button>
      </div>
    </nav>

    <section class="ribbon">
      <section v-for="g in groups" :key="g.title" class="group" :class="{ wide: g.wide }">
        <div class="body">
          <template v-for="(c, i) in g.cols" :key="i">
            <button v-if="c.big" class="big">
              <svg><use :href="'#' + c.icon" /></svg>
              <span>{{ c.label }}</span>
              <i v-if="c.caret" class="caret"></i>
            </button>
            <div v-else class="list">
              <button v-for="it in c.items" :key="it.label" :class="{ disabled: it.disabled }">
                <svg class="ic"><use :href="'#' + it.icon" /></svg>
                <span>{{ it.label }}</span>
                <i v-if="it.caret" class="caret"></i>
              </button>
            </div>
          </template>
        </div>
        <button class="title">{{ g.title }}<i class="caret"></i></button>
      </section>
    </section>

    <main class="work">
      <aside class="side">
        <div class="sidetabs">
          <button class="on"><svg class="ic"><use href="#tree" /></svg><span>模型树</span></button>
          <button><svg class="mid"><use href="#folders" /></svg><span class="fade">文件夹</span></button>
          <button><svg class="mid"><use href="#favor" /></svg><span class="fade">收藏夹</span></button>
        </div>
        <div class="sidehead">
          <h2>模型树</h2>
          <button aria-label="设置"><svg class="mid"><use href="#tools" /></svg><i class="caret"></i></button>
          <button aria-label="显示"><svg class="mid"><use href="#sheet" /></svg><i class="caret"></i></button>
          <button aria-label="隐藏项"><svg class="mid"><use href="#treehide" /></svg></button>
        </div>
        <div class="search">
          <svg class="ic"><use href="#funnel" /></svg>
          <div class="field">
            <input v-model="search" type="text" aria-label="搜索模型树">
            <button aria-label="清除" @click="search = ''"><svg viewBox="0 0 10 10"><path d="M1 1l8 8M9 1L1 9" stroke="#8f9699" stroke-width="1.200" /></svg></button>
          </div>
          <button aria-label="搜索选项"><i class="caret"></i></button>
          <button aria-label="添加"><svg class="plus"><use href="#plus" /></svg></button>
        </div>
        <ul class="tree">
          <li class="root"><svg class="ti"><use href="#cube" /></svg><span>7-15.PRT</span></li>
          <li v-for="n in tree" :key="n.label">
            <i :class="{ twist: n.open }"></i>
            <svg class="ti"><use :href="'#' + n.icon" /></svg>
            <span :class="{ selected: n.selected }">{{ n.label }}</span>
          </li>
        </ul>
      </aside>

      <div class="canvas">
        <svg class="model" viewBox="222 172 1110 511" preserveAspectRatio="xMinYMin slice" role="img" aria-label="零件模型">
          <path d="M546 486L684 484L720 690H581z" fill="#8f9de0" />
          <path d="M682 485L709 484L766 470L823 481L990 478L1026 690H718z" fill="#99809e" />
          <path d="M714 674L1024 668L1027 690H713z" fill="#8f9de0" />
          <path d="M987 478L1093 306L1156 665L1020 668z" fill="#745760" />
          <path d="M1020 667L1156 665L1142 690H1023z" fill="#545f8c" />
          <path d="M704 486L811 313L816 312C832 348 860 364 884 364L899 362L826 483z" fill="#9a829f" />
          <path d="M772 480L851 355C862 361 873 364 884 364L899 362L823 481C824 512 806 532 782 537z" fill="#96788f" />
          <path d="M709 484L772 480L782 537C744 546 712 520 709 484z" fill="#987e9b" />
          <path d="M653 315L546 486L682 485z" fill="#009200" />
          <path d="M653 315L815 312L709 484L682 485z" fill="#307800" />
          <path d="M930 309L1093 306L987 478L823 481z" fill="#307800" />
          <path d="M930 309L897 362C920 358 934 342 932 318z" fill="#00a32e" />
          <path d="M546 487L709 484M823 481L987 478" stroke="#2bb52c" fill="none" />
          <path d="M601 397V389L1045 381M601 390L618 485L653 690M880 307L898 395L913 480L946 672L940 683M881 306L772 480L808 690M715 673L709 683" stroke="#643e34" stroke-opacity=".75" fill="none" />
          <path d="M546 487L653 315M709 484L815 312M823 481L930 309" stroke="#668d36" stroke-width=".6" fill="none" />
          <path d="M653 315L816 312C832 348 860 364 884 364C912 364 934 346 932 318L930 309L1093 306L1156 665L715 674L653 315" stroke="#df6b2d" stroke-width="1.300" fill="none" />
          <path d="M714 672L1156 665" stroke="#9d4631" />
          <path d="M927 226L721 553" stroke="#514847" stroke-dasharray="8 3 2 3" />
          <path d="M1156 665H1161L1149 685M1157 668L1147 685" stroke="#555" fill="none" />
          <g class="mark"><text x="927" y="226">A_1</text><text x="600" y="390">FRONT</text><text x="1161" y="664">TOP</text></g>
          <path d="M750 463V480L754 477L757 483L760 481L757 476H762z" fill="#fff" stroke="#504c54" />
        </svg>

        <div class="viewbar">
          <button v-for="[icon, name] in viewTools" :key="icon" :class="{ pressed: icon === 'annot' }" :aria-label="name">
            <svg class="mid"><use :href="'#' + icon" /></svg>
          </button>
        </div>

        <div class="mini">
          <div v-for="(row, i) in miniTools" :key="i">
            <button v-for="m in row" :key="m" :aria-label="m"><svg class="ic"><use :href="'#' + m" /></svg></button>
          </div>
        </div>
      </div>
    </main>

    <footer class="status">
      <button class="pressed" aria-label="导航器"><svg class="ic"><use href="#panel" /></svg></button>
      <button aria-label="浏览器"><svg class="ic"><use href="#globe" /></svg></button>
      <button aria-label="全屏"><svg class="ic"><use href="#pane" /></svg></button>
      <hr>
      <div class="pick">
        <hr><hr>
        <div class="find">
          <button aria-label="查找"><svg class="ic"><use href="#binocular" /></svg></button>
          <button aria-label="查找选项"><i class="caret"></i></button>
        </div>
        <output>选择了 1 项</output>
        <label class="filter">
          <select v-model="filter" aria-label="选择过滤器"><option>几何</option><option>特征</option></select>
          <span><i class="caret"></i></span>
        </label>
      </div>
    </footer>
  </div>
</template>

<style>
body { margin: 0; }
</style>

<style scoped>
.app {
  min-height: 100vh;
  display: flex;
  flex-direction: column;
  font: 13px/20px "Noto Sans", "Noto Sans CJK SC", sans-serif;
  color: #4a4f52;
  background: #f8fbfb;
}
.defs { position: absolute; }
button {
  border: 0;
  padding: 0;
  background: none;
  font: inherit;
  color: inherit;
  display: flex;
  align-items: center;
  justify-content: center;
}
svg { display: block; flex: none; }
.ic { width: 18px; height: 18px; }
.mid { width: 20px; height: 20px; }
.caret {
  width: 0;
  border: 4px solid transparent;
  border-top: 5px solid #5f6568;
  border-bottom: 0;
}
.disabled { color: #b7babb; }
.disabled .caret { border-top-color: #b7babb; }

.titlebar {
  height: 29px;
  display: grid;
  grid-template-columns: 1fr auto 1fr;
  align-items: center;
  background: #d8e0e0;
}
.left { display: flex; align-items: center; gap: 7px; padding-left: 11px; }
.logo { width: 76px; display: flex; align-items: center; gap: 5px; font: 20px/24px Lato, sans-serif; color: #51575b; }
.logo sup { font-size: 8px; line-height: 8px; vertical-align: 8px; }
.customize { flex-direction: column; gap: 2px; height: 24px; border-left: 1px solid #b8c0c1; padding-left: 7px; margin-left: -4px; }
.customize b { width: 8px; height: 2px; background: #555b5e; }
h1 { margin: 0; font-size: 14px; line-height: 20px; font-weight: 400; color: #3d4346; }
.window { display: flex; justify-content: flex-end; gap: 16px; padding-right: 11px; }
.window svg, .help svg { width: 12px; height: 12px; }

.tabs { height: 28px; display: flex; background: #3f474b; font-size: 14px; }
.tabs > button { padding: 0 23px; color: #f1f4f4; }
.tabs > .file { padding: 0 20px; background: linear-gradient(135deg, #5cbf3b, #48a52b); }
.tabs > .active { padding: 0 24px; background: #f8fbfb; color: #44863a; }
.help { margin-left: auto; display: flex; gap: 12px; padding-right: 8px; color: #fff; }
.help .caret { border-top-color: #fff; }
.question { font-weight: 700; }

.ribbon { display: flex; padding-top: 1px; background: #f8fcfd; border-bottom: 1px solid #c0c8cb; }
.group { padding: 0 5px 0 6px; border-right: 1px solid #c8ced1; display: flex; flex-direction: column; }
.group:first-child { padding-right: 7px; }
.group.wide { padding: 0 7px; }
.body { display: flex; gap: 6px; height: 87px; }
.list { display: flex; flex-direction: column; }
.list button { height: 28px; gap: 3px; justify-content: flex-start; white-space: nowrap; }
.list .caret { margin-left: 3px; }
.big { min-width: 36px; flex-direction: column; justify-content: flex-start; padding-top: 6px; white-space: nowrap; }
.big svg { width: 34px; height: 34px; }
.big span { margin-top: 7px; }
.big .caret { margin-top: 3px; }
.title { height: 26px; gap: 4px; white-space: nowrap; margin: 0 -4px; }

.work { flex: 1; display: flex; min-height: 0; }
.side { width: 221px; border-right: 1px solid #dce2e3; background: #f8fbfb; }
.sidetabs { display: flex; height: 30px; background: #d6dede; }
.sidetabs button { width: 71px; gap: 4px; justify-content: flex-start; white-space: nowrap; padding-left: 8px; box-sizing: border-box; }
.sidetabs .on { width: 78px; background: #f8fbfb; gap: 5px; }
.fade { mask-image: linear-gradient(90deg, #000 24px, transparent 33px); }
.sidehead { display: flex; align-items: center; height: 30px; padding-left: 28px; gap: 10px; }
.sidehead button { gap: 7px; }
.sidehead h2 { margin: 0 21px 0 0; font-size: 13px; line-height: 20px; font-weight: 700; }
.search { display: flex; align-items: center; gap: 3px; padding-left: 12px; }
.field { display: flex; width: 138px; height: 29px; box-sizing: border-box; border: 1px solid #c0c5c7; background: #fff; padding-right: 5px; }
.field input { flex: 1; min-width: 0; border: 0; outline: 0; background: none; font: inherit; }
.field svg { width: 10px; height: 10px; }
.search > button { padding-left: 2px; }
.search > button + button { margin-left: 6px; }
.plus { width: 14px; height: 14px; }
.tree { list-style: none; margin: 4px 5px 0 8px; padding: 0 0 6px; border-bottom: 2px solid #66b94b; }
.tree li { display: flex; align-items: center; height: 21px; padding-left: 8px; }
.tree .root { padding-left: 3px; gap: 4px; }
.tree li > i { width: 16px; }
.tree .twist { width: 0; border: 5px solid transparent; border-left: 8px solid #858b8e; border-right: 0; margin-right: 8px; }
.ti { width: 16px; height: 16px; }
.tree .ti + span { margin-left: 4px; padding: 0 1px; }
.tree .root .ti + span { margin-left: 0; }
.selected { background: #b0e1f7; }

.canvas { flex: 1; min-width: 0; position: relative; background: #e7ebee; overflow: hidden; }
.model { position: absolute; inset: 0; width: 100%; height: 100%; }
.mark { font: 10px "Liberation Mono", monospace; fill: #5c5f61; }
.viewbar {
  position: absolute;
  top: 5px;
  left: 50%;
  transform: translateX(-50%);
  display: flex;
  gap: 2px;
  padding: 2px 5px;
  background: #f7fafb;
  border: 1px solid #b9bfc2;
}
.viewbar button { width: 24px; height: 26px; }
.viewbar .pressed, .status .pressed { background: #d8dcdd; outline: 1px solid #b4b9bb; outline-offset: -1px; }
.mini { position: absolute; left: 535px; top: 129px; width: 227px; padding-bottom: 1px; background: rgba(255, 255, 255, .38); }
.mini > div { display: flex; gap: 1px; height: 27px; }
.mini button { width: 24px; }
.mini svg { opacity: .65; }

.status { height: 32px; display: flex; align-items: center; padding-left: 6px; gap: 5px; border-top: 2px solid #d9dfe0; background: #f8fbfb; }
.status > button { width: 22px; height: 26px; }
.status hr { margin: 0 0 0 4px; border: 0; width: 1px; height: 26px; background: #c5cacc; }
.pick { margin-left: auto; display: flex; align-items: center; padding-right: 19px; }
.find { display: flex; height: 24px; border: 1px solid #cbd0d1; margin-left: 2px; }
.find button { padding: 0 5px; }
.find button + button { border-left: 1px solid #cbd0d1; padding: 0 3px; }
output { margin: 0 28px 0 6px; }
.filter { display: flex; width: 180px; height: 24px; box-sizing: border-box; border: 1px solid #bfc5c7; }
.filter select { flex: 1; appearance: none; border: 0; background: none; font: inherit; color: inherit; padding: 0 7px; }
.filter span { display: flex; align-items: center; padding: 0 3px; border-left: 1px solid #bfc5c7; }
</style>
